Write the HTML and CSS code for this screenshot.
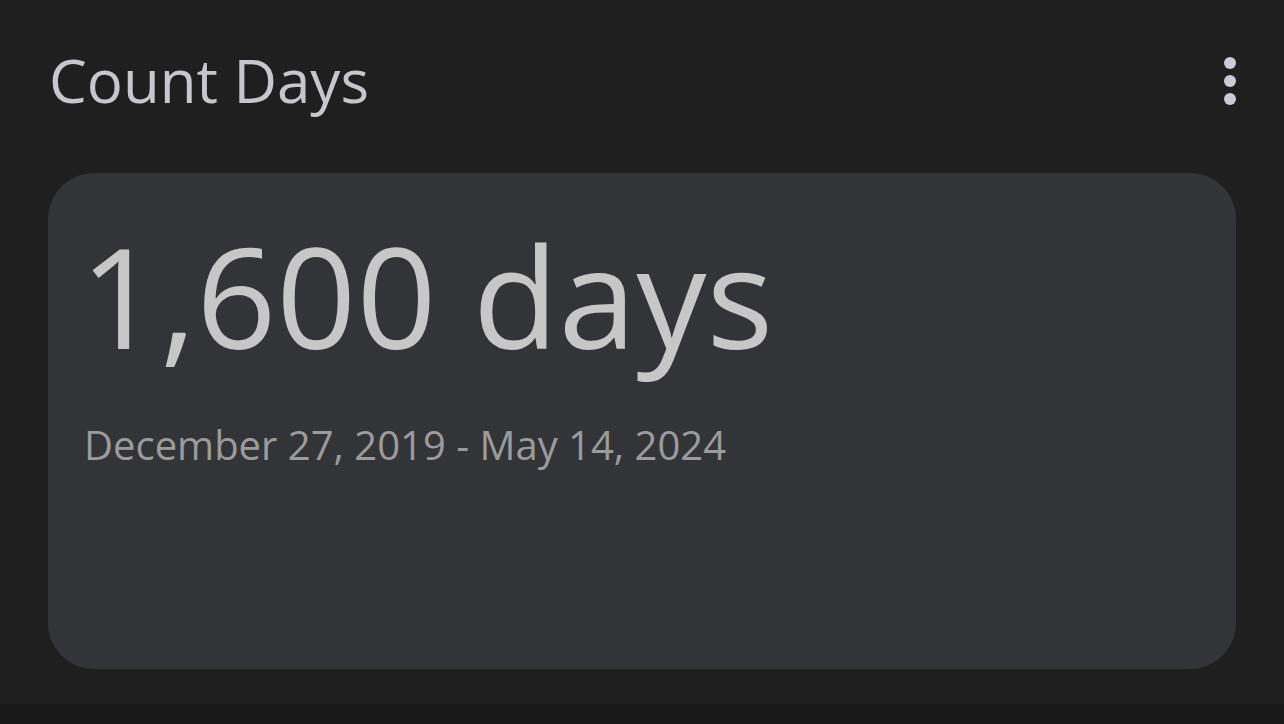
FILE: index.html
```html
<!DOCTYPE html>
<html lang="en">
<head>
  <meta charset="UTF-8">
  <title>Count Days</title>
  <link rel="stylesheet" href="styles.css">
</head>
<body>

<div class="screen">
  <div class="header">
    <h1 class="title">Count Days</h1>
    <button class="menu" aria-label="More options">
      <svg width="14" height="50" viewBox="0 0 14 50">
        <circle cx="7" cy="7" r="6" fill="#c9cbd6"/>
        <circle cx="7" cy="25" r="6" fill="#c9cbd6"/>
        <circle cx="7" cy="43" r="6" fill="#c9cbd6"/>
      </svg>
    </button>
  </div>

  <div class="card">
    <div class="count">1,600 days</div>
    <div class="range">December 27, 2019 - May 14, 2024</div>
  </div>
</div>
<div class="bottom"></div>

</body>
</html>
```

FILE: styles.css
```css
body {
  margin: 0;
  background: #181818;
  font-family: "Open Sans", Roboto, sans-serif;
}
.screen {
  height: 704px;
  background: #1f1f1f;
  padding: 0 48px;
  box-sizing: border-box;
}
.header {
  display: flex;
  justify-content: space-between;
  align-items: center;
  height: 173px;
}
.title {
  margin: -14px 0 0 0;
  font-weight: 400;
  font-size: 60px;
  color: #c5c7cd;
  padding-left: 1px;
}
.menu {
  background: none;
  border: 0;
  padding: 0;
  margin-right: -1px;
  margin-top: -8px;
}
.card {
  background: #333438;
  border-radius: 46px;
  height: 496px;
  padding: 52px 36px;
  box-sizing: border-box;
}
.count {
  font-size: 140px;
  color: #c7c7c7;
  line-height: 1;
  margin-left: -4px;
}
.range {
  font-size: 40px;
  color: #9b9b9d;
  margin-top: 52px;
}
```
